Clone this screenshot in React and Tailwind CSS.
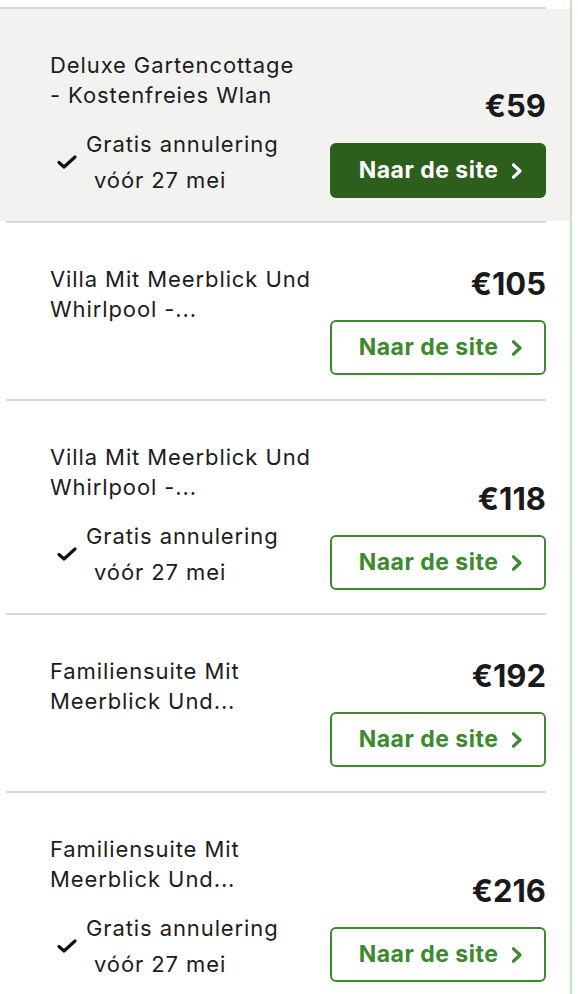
import React from 'react'

const ROWS = [
  { title: ['Deluxe Gartencottage', '- Kostenfreies Wlan'], price: '€59', gratis: true, active: true },
  { title: ['Villa Mit Meerblick Und', 'Whirlpool -...'], price: '€105', gratis: false },
  { title: ['Villa Mit Meerblick Und', 'Whirlpool -...'], price: '€118', gratis: true },
  { title: ['Familiensuite Mit', 'Meerblick Und...'], price: '€192', gratis: false },
  { title: ['Familiensuite Mit', 'Meerblick Und...'], price: '€216', gratis: true },
]

function Check() {
  return (
    <svg width="20" height="16" viewBox="0 0 20 16" className="shrink-0">
      <path d="M2 8.5 L7 13 L18 3" fill="none" stroke="#111" strokeWidth="3.2" strokeLinecap="round" strokeLinejoin="round" />
    </svg>
  )
}

function Chevron({ color }) {
  return (
    <svg width="12" height="16" viewBox="0 0 12 16" className="ml-[13px]">
      <path d="M2.5 1.8 L9 8 L2.5 14.2" fill="none" stroke={color} strokeWidth="3.2" strokeLinecap="round" strokeLinejoin="round" />
    </svg>
  )
}

function Row({ row }) {
  return (
    <div
      className={
        row.gratis
          ? 'flex justify-between items-end pt-[41px] pb-[23px] pl-[50px] pr-[24px]'
          : 'flex justify-between items-start pt-[41px] pb-[24px] pl-[50px] pr-[24px]'
      }
    >
      <div className="flex flex-col">
        <div className="text-[22px] leading-[30px] tracking-[0.9px] text-[#1c1c1c]">
          {row.title.map((t) => (
            <div key={t} className="whitespace-nowrap">{t}</div>
          ))}
        </div>
        {row.gratis && (
          <div className="flex items-center mt-[16px]">
            <div className="ml-[7px]">
              <Check />
            </div>
            <div className="ml-[9px] text-[22px] leading-[36px] tracking-[0.9px] text-[#1c1c1c]">
              <div className="whitespace-nowrap">Gratis annulering</div>
              <div className="whitespace-nowrap pl-[8px]">vóór 27 mei</div>
            </div>
          </div>
        )}
      </div>
      <div className={row.gratis ? 'flex flex-col items-end' : 'flex flex-col items-end pt-[4px]'}>
        <div className="text-[31px] leading-[32px] font-bold text-[#1a1a1a]">{row.price}</div>
        {row.active ? (
          <button className="mt-[21px] w-[216px] h-[55px] rounded-[6px] bg-[#2c5e1c] text-white text-[23px] font-bold tracking-[0.5px] flex items-center justify-center pl-[6px]">
            Naar de site
            <Chevron color="#ffffff" />
          </button>
        ) : (
          <button className="mt-[20px] w-[216px] h-[55px] rounded-[6px] border-2 border-[#3b8a2e] bg-white text-[#3b8a2e] text-[23px] font-bold tracking-[0.5px] flex items-center justify-center pl-[6px]">
            Naar de site
            <Chevron color="#3b8a2e" />
          </button>
        )}
      </div>
    </div>
  )
}

export default function App() {
  return (
    <div className="flex h-[994px] overflow-hidden bg-white" style={{ fontFamily: 'Inter, "Noto Sans", sans-serif' }}>
      <div className="w-[570px] flex flex-col pt-[7px]">
        <div className="border-t-2 border-[#d9d9d9] mr-[24px]" />
        {ROWS.map((row, i) => (
          <React.Fragment key={i}>
            <div className={row.active ? 'bg-[#f2f2f1]' : ''}>
              <Row row={row} />
            </div>
            <div className="border-t-2 border-[#d9d9d9] ml-[6px] mr-[24px]" />
          </React.Fragment>
        ))}
      </div>
      <div className="w-[2px] shrink-0 bg-[#bfe9b8]" />
    </div>
  )
}
